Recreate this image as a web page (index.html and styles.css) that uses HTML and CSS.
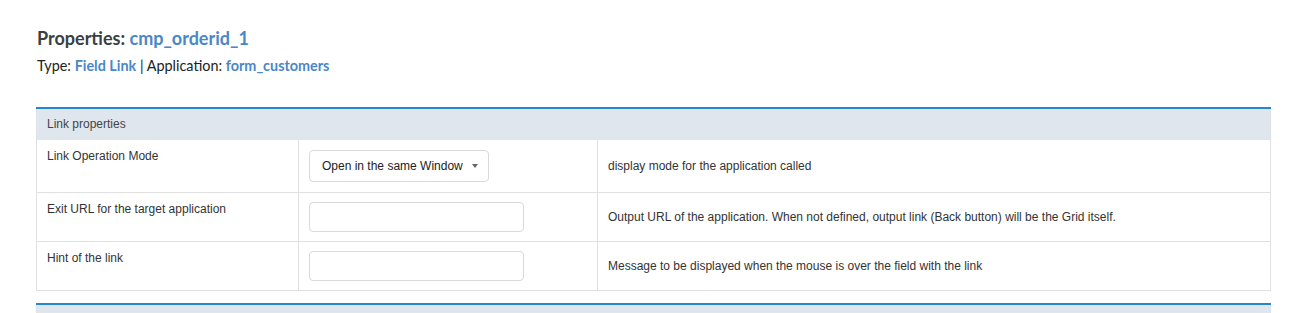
FILE: index.html
```html
<!DOCTYPE html>
<html>
<head>
<meta charset="utf-8">
<link rel="stylesheet" href="styles.css">
</head>
<body>
<div class="page">
  <h1 class="title">Properties: <span class="accent">cmp_orderid_1</span></h1>
  <div class="subtitle">Type: <span class="accent">Field Link</span> | Application: <span class="accent">form_customers</span></div>

  <div class="panel">
    <div class="panel-head">Link properties</div>
    <table class="props">
      <tr class="r1">
        <td class="c1">Link Operation Mode</td>
        <td class="c2"><div class="select">Open in the same Window<span class="caret"></span></div></td>
        <td class="c3">display mode for the application called</td>
      </tr>
      <tr class="r2">
        <td class="c1">Exit URL for the target application</td>
        <td class="c2"><div class="input"></div></td>
        <td class="c3">Output URL of the application. When not defined, output link (Back button) will be the Grid itself.</td>
      </tr>
      <tr class="r2">
        <td class="c1">Hint of the link</td>
        <td class="c2"><div class="input"></div></td>
        <td class="c3">Message to be displayed when the mouse is over the field with the link</td>
      </tr>
    </table>
  </div>
  <div class="panel panel-next"><div class="panel-head"></div></div>
</div>
</body>
</html>
```
FILE: styles.css
```css
html, body { margin: 0; padding: 0; background: #fff; }
body { font-family: "Liberation Sans", Arial, sans-serif; color: #333; }
.page { padding: 27px 18px 0 36px; }
.title {
  margin: 0 0 0 1px;
  font-family: Lato, sans-serif;
  font-weight: 700;
  font-size: 18px;
  line-height: 22px;
  color: #3a3f44;
}
.accent { color: #4a87c7; }
.subtitle {
  margin: 8px 0 0 1px;
  font-family: Lato, sans-serif;
  font-size: 14.4px;
  line-height: 18px;
  color: #222;
}
.subtitle .accent { font-weight: 700; }
.panel {
  margin-top: 32px;
  border-top: 2px solid #2385d4;
}
.panel-head {
  background: #dfe6ee;
  height: 31px;
  line-height: 31px;
  padding-left: 10px;
  font-size: 12px;
  color: #444;
  border-left: 1px solid #dde2e8;
  border-right: 1px solid #dde2e8;
}
.props {
  width: 100%;
  border-collapse: collapse;
  font-size: 12px;
  color: #333;
}
.props td {
  border: 1px solid #e0e0e0;
  padding: 10px 10px;
}
.props tr:first-child td { border-top: none; }
.c1 { width: 241px; vertical-align: top; line-height: 13px; }
.c2 { width: 278px; vertical-align: middle; }
.c3 { vertical-align: middle; }
.r2 .c2 { padding-top: 9px; padding-bottom: 9px; }
.select {
  display: inline-flex;
  align-items: center;
  box-sizing: border-box;
  width: 180px;
  height: 32px;
  padding: 0 12px;
  border: 1px solid #d9d9d9;
  border-radius: 4px;
  font-size: 12px;
  white-space: nowrap;
  color: #222;
}
.caret {
  margin-left: 9px;
  width: 0; height: 0;
  border-left: 3px solid transparent;
  border-right: 3px solid transparent;
  border-top: 4px solid #666;
}
.input {
  box-sizing: border-box;
  width: 215px;
  height: 30px;
  border: 1px solid #d9d9d9;
  border-radius: 4px;
}
.panel-next { margin-top: 12px; }
.panel-next .panel-head { height: 20px; }
```
